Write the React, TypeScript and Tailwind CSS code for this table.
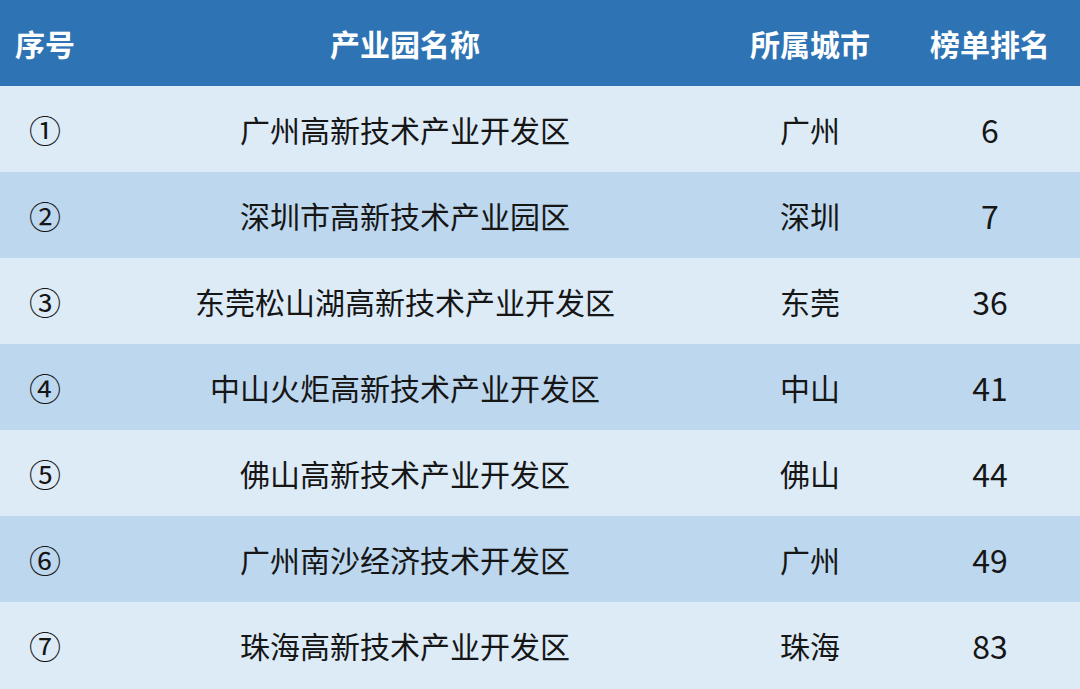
import React from "react";

const rows = [
  { no: "①", name: "广州高新技术产业开发区", city: "广州", rank: "6" },
  { no: "②", name: "深圳市高新技术产业园区", city: "深圳", rank: "7" },
  { no: "③", name: "东莞松山湖高新技术产业开发区", city: "东莞", rank: "36" },
  { no: "④", name: "中山火炬高新技术产业开发区", city: "中山", rank: "41" },
  { no: "⑤", name: "佛山高新技术产业开发区", city: "佛山", rank: "44" },
  { no: "⑥", name: "广州南沙经济技术开发区", city: "广州", rank: "49" },
  { no: "⑦", name: "珠海高新技术产业开发区", city: "珠海", rank: "83" },
];

const font = {
  fontFamily: '"Noto Sans CJK SC", "Noto Sans", sans-serif',
};

export default function App() {
  return (
    <div className="h-[689px] w-[1080px] bg-[#DDEBF7]" style={font}>
      {/* header */}
      <div className="grid h-[86px] grid-cols-[90px_630px_180px_180px] items-center bg-[#2E74B5] text-[30px] font-bold text-white">
        <div className="text-center">序号</div>
        <div className="text-center">产业园名称</div>
        <div className="text-center">所属城市</div>
        <div className="text-center">榜单排名</div>
      </div>

      {rows.map((r, i) => (
        <div
          key={r.no}
          className={
            i % 2 === 0
              ? "grid h-[86px] grid-cols-[90px_630px_180px_180px] items-center bg-[#DDEBF7] text-[#161616]"
              : "grid h-[86px] grid-cols-[90px_630px_180px_180px] items-center bg-[#BDD7EE] text-[#161616]"
          }
        >
          <div className="text-center text-[32px]">{r.no}</div>
          <div className="text-center text-[30px]">{r.name}</div>
          <div className="text-center text-[30px]">{r.city}</div>
          <div className="text-center text-[32px]">{r.rank}</div>
        </div>
      ))}
    </div>
  );
}
